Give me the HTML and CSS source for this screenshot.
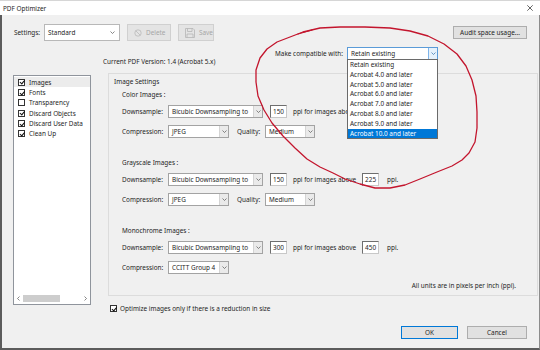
FILE: index.html
```html
<!DOCTYPE html>
<html lang="en">
<head>
    <meta charset="UTF-8">
    <meta name="viewport" content="width=device-width, initial-scale=1.0">
    <title>PDF Optimizer</title>
    <link rel="stylesheet" href="styles.css">
</head>
<body>
<div class="window">
    <div class="titlebar">
        <span>PDF Optimizer</span>
        <svg class="close" viewBox="0 0 6 6"><path d="M0.3 0.3 L5.7 5.7 M5.7 0.3 L0.3 5.7"/></svg>
    </div>
    <div class="client">
        <div class="toolbar">
            <span class="set-lbl">Settings:</span>
            <div class="combo settings">
                <span class="val">Standard</span>
                <svg class="chev" viewBox="0 0 5 3"><path d="M0.5 0.5 L2.5 2.5 L4.5 0.5"/></svg>
            </div>
            <button type="button" class="tool" disabled>
                <svg class="ico" viewBox="0 0 9 9"><circle cx="4.5" cy="4.5" r="3.6"/><path d="M2 2 L7 7"/></svg>
                Delete
            </button>
            <button type="button" class="tool" disabled>
                <svg class="ico save" viewBox="0 0 10 10"><path d="M0.5 0.5 H8 L9.5 2 V9.5 H0.5 Z M2.5 0.5 V3.5 H7 V0.5 M2 9.5 V6 H8 V9.5"/></svg>
                Save
            </button>
            <button type="button" class="btn audit">Audit space usage...</button>
        </div>

        <div class="verrow">
            <span class="version">Current PDF Version: 1.4 (Acrobat 5.x)</span>
            <div class="compat">
                <span>Make compatible with:</span>
                <div class="combo focus">
                    <span class="val">Retain existing</span>
                    <span class="arr"><svg class="chev" viewBox="0 0 5 3"><path d="M0.5 0.5 L2.5 2.5 L4.5 0.5"/></svg></span>
                    <ul class="droplist">
                        <li>Retain existing</li>
                        <li>Acrobat 4.0 and later</li>
                        <li>Acrobat 5.0 and later</li>
                        <li>Acrobat 6.0 and later</li>
                        <li>Acrobat 7.0 and later</li>
                        <li>Acrobat 8.0 and later</li>
                        <li>Acrobat 9.0 and later</li>
                        <li class="sel">Acrobat 10.0 and later</li>
                    </ul>
                </div>
            </div>
        </div>

        <div class="main">
            <div class="list">
                <div class="item hot"><span class="cb on"></span>Images</div>
                <div class="item"><span class="cb on"></span>Fonts</div>
                <div class="item"><span class="cb"></span>Transparency</div>
                <div class="item"><span class="cb on"></span>Discard Objects</div>
                <div class="item"><span class="cb on"></span>Discard User Data</div>
                <div class="item"><span class="cb on"></span>Clean Up</div>
                <div class="hscroll">
                    <svg class="sarr" viewBox="0 0 3 5"><path d="M2.5 0.5 L0.5 2.5 L2.5 4.5"/></svg>
                    <span class="thumb"></span>
                    <svg class="sarr" viewBox="0 0 3 5"><path d="M0.5 0.5 L2.5 2.5 L0.5 4.5"/></svg>
                </div>
            </div>

            <div class="right">
                <div class="panel">
                    <div class="heading">Image Settings</div>

                    <div class="group">
                        <div class="glabel first">Color Images :</div>
                        <div class="row">
                            <span class="lbl">Downsample:</span>
                            <div class="combo w-ds"><span class="val">Bicubic Downsampling to</span><span class="arr"><svg class="chev" viewBox="0 0 5 3"><path d="M0.5 0.5 L2.5 2.5 L4.5 0.5"/></svg></span></div>
                            <span class="num">150</span>
                            <span class="ppi">ppi for images above</span>
                            <span class="num near">225</span>
                            <span class="tail">ppi.</span>
                        </div>
                        <div class="row">
                            <span class="lbl">Compression:</span>
                            <div class="combo w-cmp"><span class="val">JPEG</span><span class="arr"><svg class="chev" viewBox="0 0 5 3"><path d="M0.5 0.5 L2.5 2.5 L4.5 0.5"/></svg></span></div>
                            <span class="qlbl">Quality:</span>
                            <div class="combo w-q"><span class="val">Medium</span><span class="arr"><svg class="chev" viewBox="0 0 5 3"><path d="M0.5 0.5 L2.5 2.5 L4.5 0.5"/></svg></span></div>
                        </div>
                    </div>

                    <div class="group">
                        <div class="glabel">Grayscale Images :</div>
                        <div class="row">
                            <span class="lbl">Downsample:</span>
                            <div class="combo w-ds"><span class="val">Bicubic Downsampling to</span><span class="arr"><svg class="chev" viewBox="0 0 5 3"><path d="M0.5 0.5 L2.5 2.5 L4.5 0.5"/></svg></span></div>
                            <span class="num">150</span>
                            <span class="ppi">ppi for images above</span>
                            <span class="num near">225</span>
                            <span class="tail">ppi.</span>
                        </div>
                        <div class="row">
                            <span class="lbl">Compression:</span>
                            <div class="combo w-cmp"><span class="val">JPEG</span><span class="arr"><svg class="chev" viewBox="0 0 5 3"><path d="M0.5 0.5 L2.5 2.5 L4.5 0.5"/></svg></span></div>
                            <span class="qlbl">Quality:</span>
                            <div class="combo w-q"><span class="val">Medium</span><span class="arr"><svg class="chev" viewBox="0 0 5 3"><path d="M0.5 0.5 L2.5 2.5 L4.5 0.5"/></svg></span></div>
                        </div>
                    </div>

                    <div class="group">
                        <div class="glabel">Monochrome Images :</div>
                        <div class="row">
                            <span class="lbl">Downsample:</span>
                            <div class="combo w-ds"><span class="val">Bicubic Downsampling to</span><span class="arr"><svg class="chev" viewBox="0 0 5 3"><path d="M0.5 0.5 L2.5 2.5 L4.5 0.5"/></svg></span></div>
                            <span class="num">300</span>
                            <span class="ppi">ppi for images above</span>
                            <span class="num near">450</span>
                            <span class="tail">ppi.</span>
                        </div>
                        <div class="row">
                            <span class="lbl">Compression:</span>
                            <div class="combo w-cmp"><span class="val">CCITT Group 4</span><span class="arr"><svg class="chev" viewBox="0 0 5 3"><path d="M0.5 0.5 L2.5 2.5 L4.5 0.5"/></svg></span></div>
                        </div>
                    </div>

                    <div class="units">All units are in pixels per inch (ppi).</div>
                </div>
                <div class="opt"><span class="cb on"></span>Optimize images only if there is a reduction in size</div>
            </div>
        </div>

        <div class="footer">
            <button type="button" class="btn ok">OK</button>
            <button type="button" class="btn cancel">Cancel</button>
        </div>
    </div>

    <!-- red marker scribble drawn over the screenshot -->
    <svg class="annot" viewBox="0 0 540 350">
        <path d="M298 34 L312 30"/>
        <polyline points="303,32 320,28 340,27 365,27 390,28 410,31 428,36 444,44 457,54 466,66 472,80 476,96 477,112 477,128 475,142 469,153 462,160 452,166 437,172 420,179 405,185 390,188 375,188 360,184 345,179 333,173 320,167 307,159 295,148 283,136 272,123 264,110 258,96 256,82 256,70 260,58 267,49 277,42 290,37 303,32"/>
    </svg>
</div>
</body>
</html>
```

FILE: styles.css
```css
* {
    box-sizing: border-box;
    font-family: "Noto Sans", "Open Sans", sans-serif;
    font-size: 6.4px;

    /* windows 10 dialog colours */
    --face: #f0f0f0;
    --ink: #1e1e1e;
    --edge: #adadad;
    --field: #a3a3a3;
    --accent: #0078d7;
}
body{
    margin: 0;
    color: var(--ink);
}
.window{
    position: relative;
    width: 540px;
    height: 350px;
    display: flex;
    flex-direction: column;
    background-color: var(--face);
    overflow: hidden;
}
.titlebar{
    height: 15px;
    background-color: #fff;
    display: flex;
    align-items: center;
    justify-content: space-between;
    padding: 0 7px 0 3px;
    border-top: 1px solid #d6d6d6;
}
.close{
    width: 6px;
    height: 6px;
    & path{
        stroke: #222;
        stroke-width: 0.7;
        fill: none;
    }
}
.client{
    flex: 1;
    display: flex;
    flex-direction: column;
    border-left: 2px solid #5c5c5c;
    border-right: 1px solid #8c8c8c;
    border-bottom: 2px solid #5c5c5c;
}

/* top bar */
.toolbar{
    display: flex;
    align-items: center;
    height: 17px;
    margin-top: 9px;
    padding: 0 12px;
}
.set-lbl{
    width: 30px;
}
.chev{
    width: 5px;
    height: 3px;
    & path{
        fill: none;
        stroke: #555;
        stroke-width: 0.7;
    }
}
.combo{
    position: relative;
    display: flex;
    align-items: center;
    height: 13px;
    background-color: #fff;
    border: 1px solid var(--field);
    & .val{
        flex: 1;
        padding-left: 3px;
        white-space: nowrap;
        overflow: hidden;
    }
    & .arr{
        width: 9px;
        align-self: stretch;
        display: flex;
        align-items: center;
        justify-content: center;
        background-color: #eaeaea;
        border-left: 1px solid #d4d4d4;
    }
}
.settings{
    width: 76px;
    height: 17px;
    border-color: #b8b8b8;
    & .chev{
        margin-right: 4px;
    }
}
button{
    padding: 0;
    margin: 0;
    color: var(--ink);
}
.tool{
    display: flex;
    align-items: center;
    gap: 4px;
    height: 17px;
    margin-left: 7px;
    padding-left: 6px;
    background-color: #e4e4e4;
    border: 1px solid #d0d0d0;
    color: #a6a6a6;
    &:first-of-type{
        width: 44px;
    }
    &:last-of-type{
        width: 39px;
        padding-left: 4px;
        gap: 3px;
    }
}
.ico{
    width: 8px;
    height: 8px;
    & circle, & path{
        fill: none;
        stroke: #b5b5b5;
        stroke-width: 0.8;
    }
    &.save{
        width: 10px;
        height: 10px;
    }
}
.btn{
    height: 13px;
    background-color: #e1e1e1;
    border: 1px solid var(--edge);
}
.audit{
    width: 74px;
    margin-left: auto;
}

.verrow{
    display: flex;
    align-items: flex-start;
    height: 13px;
    margin-top: 6px;
}
.version{
    margin-left: 101px;
    margin-top: 10px;
    line-height: 9px;
}
.compat{
    display: flex;
    align-items: center;
    gap: 4px;
    margin-left: auto;
    margin-right: 101px;
    & .combo{
        width: 91px;
    }
}
.focus{
    border-color: #5a9bd8;
    & .arr{
        background-color: #e5f1fb;
        border-left-color: #7eb4ea;
    }
    & .chev path{
        stroke: #2f6eaa;
    }
}
.droplist{
    position: absolute;
    z-index: 2;
    top: 11px;
    left: -1px;
    right: -1px;
    margin: 0;
    padding: 0;
    list-style: none;
    background-color: #fff;
    border: 1px solid #6a6a6a;
    & li{
        height: 9.8px;
        line-height: 9.8px;
        padding-left: 2px;
        white-space: nowrap;
    }
    & .sel{
        background-color: var(--accent);
        color: #fff;
    }
}

/* main area */
.main{
    display: flex;
    gap: 17px;
    margin-top: 13px;
    padding-left: 11px;
}
.list{
    width: 78px;
    height: 230px;
    margin-top: 2px;
    display: flex;
    flex-direction: column;
    padding-top: 1px;
    background-color: #fff;
    border: 1px solid #8f949c;
}
.item{
    display: flex;
    align-items: center;
    gap: 4px;
    height: 10.3px;
    padding-left: 4px;
    white-space: nowrap;
    &.hot{
        background-color: #ececec;
    }
}
.cb{
    position: relative;
    flex: none;
    width: 7px;
    height: 7px;
    background-color: #fff;
    border: 1px solid #333;
    &.on::after{
        content: "";
        position: absolute;
        left: 1.6px;
        top: -0.2px;
        width: 1.6px;
        height: 3.6px;
        border: solid #111;
        border-width: 0 1.2px 1.2px 0;
        transform: rotate(40deg);
    }
}
.hscroll{
    display: flex;
    align-items: center;
    margin-top: auto;
    height: 12px;
    padding: 0 3px;
    & .thumb{
        width: 37px;
        height: 7px;
        margin-left: 3px;
        background-color: #cdcdcd;
    }
    & .sarr:last-child{
        margin-left: auto;
    }
}
.sarr{
    width: 3px;
    height: 5px;
    & path{
        fill: none;
        stroke: #555;
        stroke-width: 0.7;
    }
}

.right{
    width: 430px;
    display: flex;
    flex-direction: column;
}
.panel{
    height: 223px;
    padding: 3px 21px 0 5px;
    border: 1px solid #dcdcdc;
}
.heading, .glabel, .units{
    line-height: 9px;
}
.group{
    margin-left: 8px;
}
.glabel{
    margin-top: 20px;
    &.first{
        margin-top: 4px;
    }
}
.row{
    display: flex;
    align-items: center;
    height: 13px;
    margin-top: 7px;
    white-space: nowrap;
    & .lbl{
        width: 46px;
    }
}
.glabel + .row{
    margin-top: 6px;
}
.w-ds{ width: 95px; }
.w-cmp{ width: 61px; }
.w-q{ width: 50px; }
.num{
    width: 17px;
    height: 13px;
    margin-left: 7px;
    padding-left: 2px;
    line-height: 11px;
    background-color: #fff;
    border: 1px solid #c8c8c8;
    border-top-color: #6e6e6e;
    border-left-color: #6e6e6e;
    &.near{
        margin-left: 6px;
    }
}
.ppi{
    margin-left: 6px;
}
.tail{
    margin-left: 8px;
}
.qlbl{
    width: 28px;
    margin-left: 8px;
}
.units{
    margin-top: 7px;
    text-align: right;
}
.opt{
    display: flex;
    align-items: center;
    gap: 3px;
    margin-top: 8px;
    padding-left: 2px;
    line-height: 9px;
}

.footer{
    display: flex;
    justify-content: flex-end;
    gap: 9px;
    margin-top: auto;
    padding: 0 12px 9px 0;
}
.ok{
    width: 57px;
    border-color: var(--accent);
}
.cancel{
    width: 60px;
}

.annot{
    position: absolute;
    z-index: 3;
    left: 0;
    top: 0;
    width: 540px;
    height: 350px;
    pointer-events: none;
    & path, & polyline{
        fill: none;
        stroke: #c3152d;
        stroke-width: 1.3;
        stroke-linejoin: round;
        stroke-linecap: round;
    }
}
```
